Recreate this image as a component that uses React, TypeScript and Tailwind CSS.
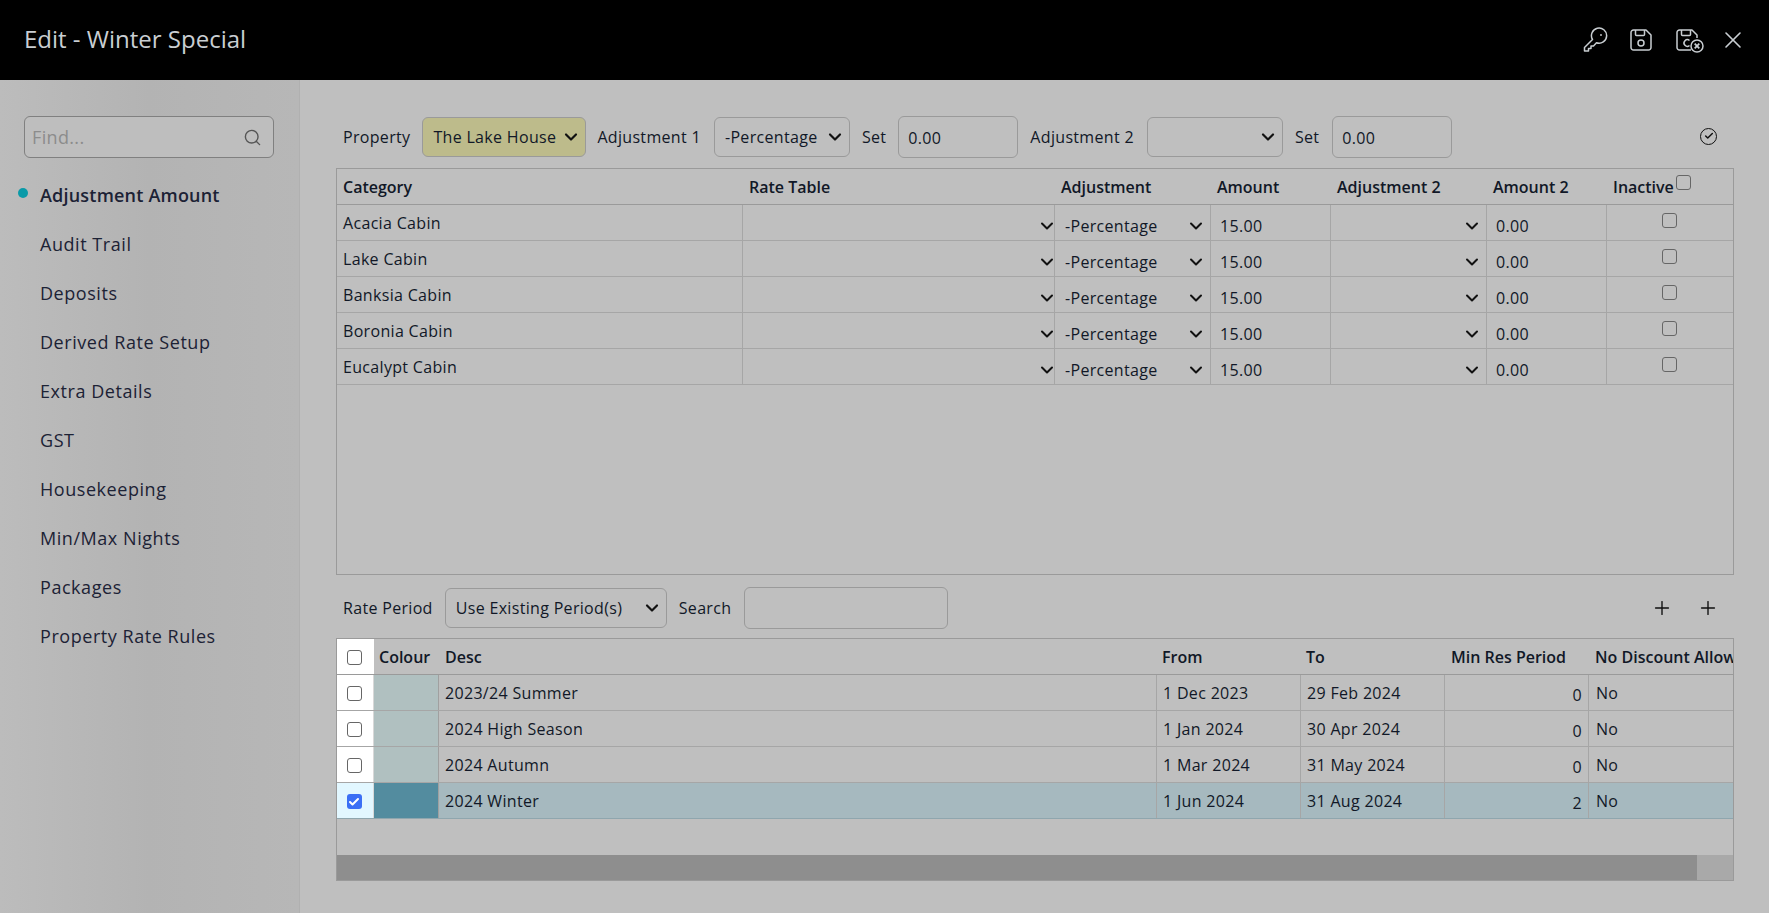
import { ChevronDown, Search, Check, Plus, X } from "lucide-react";

const navItems = [
  "Adjustment Amount",
  "Audit Trail",
  "Deposits",
  "Derived Rate Setup",
  "Extra Details",
  "GST",
  "Housekeeping",
  "Min/Max Nights",
  "Packages",
  "Property Rate Rules",
];

const categories = ["Acacia Cabin", "Lake Cabin", "Banksia Cabin", "Boronia Cabin", "Eucalypt Cabin"];

const periods = [
  { desc: "2023/24 Summer", from: "1 Dec 2023", to: "29 Feb 2024", min: 0, checked: false },
  { desc: "2024 High Season", from: "1 Jan 2024", to: "30 Apr 2024", min: 0, checked: false },
  { desc: "2024 Autumn", from: "1 Mar 2024", to: "31 May 2024", min: 0, checked: false },
  { desc: "2024 Winter", from: "1 Jun 2024", to: "31 Aug 2024", min: 2, checked: true },
];

function KeyIcon() {
  return (
    <svg width="26" height="26" viewBox="0 0 26 26" fill="none" stroke="#c9ced2" strokeWidth="1.5" strokeLinejoin="round">
      <path d="M9.5 12.5 1.5 20.5v3.5h4v-2.5h2.5V19h2.5l3-3.2a7.6 7.6 0 1 0-4-3.3Z" />
      <circle cx="18" cy="8" r="0.9" fill="#c9ced2" stroke="none" />
    </svg>
  );
}

function SaveIcon() {
  return (
    <svg width="22" height="22" viewBox="0 0 22 22" fill="none" stroke="#c9ced2" strokeWidth="1.5" strokeLinejoin="round">
      <path d="M3.5 1h12.5L21 6v12.5a2.5 2.5 0 0 1-2.5 2.5h-15A2.5 2.5 0 0 1 1 18.5v-15A2.5 2.5 0 0 1 3.5 1Z" />
      <path d="M5.5 1v4.5a1 1 0 0 0 1 1h7a1 1 0 0 0 1-1V1" />
      <circle cx="11" cy="14" r="3" />
    </svg>
  );
}

function SaveCloseIcon() {
  return (
    <svg width="28" height="24" viewBox="0 0 28 24" fill="none" stroke="#c9ced2" strokeWidth="1.5" strokeLinejoin="round">
      <path d="M15 21H3.5A2.5 2.5 0 0 1 1 18.5v-15A2.5 2.5 0 0 1 3.5 1h12.5L21 6v3" />
      <path d="M5.5 1v4.5a1 1 0 0 0 1 1h7a1 1 0 0 0 1-1V1" />
      <path d="M13.5 11.5a3.3 3.3 0 1 0 0 5" />
      <circle cx="21" cy="17" r="6" />
      <path d="m18.7 14.7 4.6 4.6m0-4.6-4.6 4.6" strokeWidth="1.8" />
    </svg>
  );
}

function SelectBox({ value, className }: { value: string; className: string }) {
  return (
    <div className={`flex h-10 items-center justify-between rounded-md border border-[#9a9a9a] pl-[10px] pr-[4px] text-[16px] text-[#111827] ${className}`}>
      <span className="whitespace-nowrap">{value}</span>
      <ChevronDown size={20} strokeWidth={2.6} className="shrink-0 text-[#111]" />
    </div>
  );
}

function TextBox({ value, className }: { value: string; className: string }) {
  return (
    <div className={`flex h-[42px] items-center rounded-md border border-[#9a9a9a] px-[9px] pt-[2px] text-[16px] text-[#111827] ${className}`}>
      {value}
    </div>
  );
}

function CellSelect({ value, tight }: { value: string; tight?: boolean }) {
  return (
    <div className={`flex h-full items-center justify-between border-l border-[#a6a6a6] pl-[10px] pt-[6px] ${tight ? "pr-0" : "pr-[4px]"}`}>
      <span>{value}</span>
      <ChevronDown size={20} strokeWidth={2.4} className={`shrink-0 text-[#111] ${tight ? "-mr-[3px]" : ""}`} />
    </div>
  );
}

function Checkbox({ checked }: { checked?: boolean }) {
  return checked ? (
    <div className="flex size-[15px] items-center justify-center rounded-[3px] bg-[#3b6ff5]">
      <Check size={12} strokeWidth={4} className="text-white" />
    </div>
  ) : (
    <div className="size-[15px] rounded-[3px] border-[1.5px] border-[#666]" />
  );
}

function Sidebar() {
  return (
    <aside className="w-[300px] shrink-0 border-r border-[#b0b0b0] bg-gradient-to-r from-[#bcbcbc] via-[#b3b3b3] to-[#b7b7b7] pl-6 pr-6 pt-[36px]">
      <div className="flex h-[42px] w-[250px] items-center justify-between rounded-md border border-[#808080] bg-[#bebebe] pl-[7px] pr-[11px]">
        <span className="text-[18px] tracking-[0.35px] text-[#8c8c8c]">Find...</span>
        <Search size={19} strokeWidth={1.75} className="text-[#555]" />
      </div>
      <nav className="mt-[13px] flex flex-col">
        {navItems.map((item, i) => (
          <div
            key={item}
            className={`relative flex h-[49px] items-center pl-[16px] text-[18px] text-[#1c2235] ${i === 0 ? "font-semibold tracking-[0.2px]" : "tracking-[0.55px]"}`}
          >
            {i === 0 && <span className="absolute left-[-6px] top-[17px] size-[10px] rounded-full bg-[#0a9aa8]" />}
            {item}
          </div>
        ))}
      </nav>
    </aside>
  );
}

const catCols = "grid grid-cols-[405px_312px_156px_120px_156px_120px_1fr]";
const periodCols = "grid grid-cols-[37px_65px_717px_144px_144px_144px_1fr]";

function CategoryTable() {
  return (
    <div className="mt-[10px] h-[407px] overflow-hidden border border-[#9a9a9a] text-[16px] text-[#111827]">
      <div className={`${catCols} h-[36px] items-center border-b border-[#9a9a9a] font-semibold tracking-normal`}>
        <div className="pl-[6px]">Category</div>
        <div className="pl-[7px]">Rate Table</div>
        <div className="pl-[7px]">Adjustment</div>
        <div className="pl-[7px]">Amount</div>
        <div className="pl-[7px]">Adjustment 2</div>
        <div className="pl-[7px]">Amount 2</div>
        <div className="flex items-center pl-[7px]">
          Inactive
          <div className="mb-2 ml-[2px]">
            <div className="size-[15px] rounded-[3px] border-[1.5px] border-[#666]" />
          </div>
        </div>
      </div>
      {categories.map((name) => (
        <div key={name} className={`${catCols} h-[36px] border-b border-[#a6a6a6]`}>
          <div className="flex items-center pl-[6px] pt-[1px]">{name}</div>
          <CellSelect value="" tight />
          <CellSelect value="-Percentage" />
          <div className="flex items-center border-l border-[#a6a6a6] pl-[9px] pt-[6px]">15.00</div>
          <CellSelect value="" />
          <div className="flex items-center border-l border-[#a6a6a6] pl-[9px] pt-[6px]">0.00</div>
          <div className="flex items-center justify-center border-l border-[#a6a6a6] pb-[5px] pr-[2px]">
            <Checkbox />
          </div>
        </div>
      ))}
    </div>
  );
}

function PeriodTable() {
  return (
    <div className="mt-[9px] flex h-[243px] flex-col overflow-hidden border border-[#9a9a9a] text-[16px] text-[#111827]">
      <div className="flex-1">
        <div className={`${periodCols} h-[36px] items-center border-b border-[#9a9a9a] font-semibold tracking-normal whitespace-nowrap`}>
          <div className="flex h-full items-center justify-center bg-white pr-[2px] pt-[2px]">
            <Checkbox />
          </div>
          <div className="pl-[5px]">Colour</div>
          <div className="pl-[6px]">Desc</div>
          <div className="pl-[6px]">From</div>
          <div className="pl-[6px]">To</div>
          <div className="pl-[7px]">Min Res Period</div>
          <div className="overflow-hidden pl-[7px]">No Discount Allowed</div>
        </div>
        {periods.map((p) => (
          <div
            key={p.desc}
            className={`${periodCols} h-[36px] border-b ${p.checked ? "border-[#8fa6ae] bg-[#a6b9bf]" : "border-[#a6a6a6]"}`}
          >
            <div className={`flex items-center justify-center border-r border-[#d8d8d8] pr-[2px] pt-[2px] ${p.checked ? "bg-[#e2f7ff]" : "bg-white"}`}>
              <Checkbox checked={p.checked} />
            </div>
            <div className={`border-r border-[#a0a0a0] ${p.checked ? "bg-[#538c9f]" : "bg-[#b0c0c0]"}`} />
            <div className="flex items-center pl-[6px]">{p.desc}</div>
            <div className="flex items-center border-l border-[#a6a6a6] pl-[6px]">{p.from}</div>
            <div className="flex items-center border-l border-[#a6a6a6] pl-[6px]">{p.to}</div>
            <div className="flex items-center justify-end border-l border-[#a6a6a6] pr-[6px] pt-[4px]">{p.min}</div>
            <div className="flex items-center border-l border-[#a6a6a6] pl-[7px]">No</div>
          </div>
        ))}
      </div>
      <div className="h-[25px] shrink-0 bg-[#a9a9a9]">
        <div className="h-full w-[1360px] bg-[#8e8e8e]" />
      </div>
    </div>
  );
}

export default function App() {
  return (
    <div className="flex h-[913px] w-full flex-col overflow-hidden bg-[#bfbfbf] [font-family:Open_Sans,sans-serif]">
      <header className="flex h-[80px] shrink-0 items-center justify-between bg-black pl-[24px] pr-[22px]">
        <h1 className="pb-[2px] text-[24px] font-normal text-[#c9ced2]">Edit - Winter Special</h1>
        <div className="flex items-center">
          <KeyIcon />
          <div className="ml-[21px]"><SaveIcon /></div>
          <div className="ml-[24px] mt-[2px]"><SaveCloseIcon /></div>
          <X size={28} strokeWidth={1.4} className="ml-[15px] text-[#c9ced2]" />
        </div>
      </header>
      <div className="flex flex-1">
        <Sidebar />
        <main className="flex-1 pl-[36px] pr-[35px] pt-[36px] text-[16px] tracking-[0.32px] text-[#111827]">
          <div className="flex items-center">
            <span className="ml-[7px]">Property</span>
            <SelectBox value="The Lake House" className="ml-[12px] w-[164px] border-[#9a9a9a] bg-[#bdbb8b]" />
            <span className="ml-[11px]">Adjustment 1</span>
            <SelectBox value="-Percentage" className="ml-[13px] w-[136px]" />
            <span className="ml-[12px]">Set</span>
            <TextBox value="0.00" className="ml-[12px] w-[120px]" />
            <span className="ml-[12px]">Adjustment 2</span>
            <SelectBox value="" className="ml-[13px] w-[136px]" />
            <span className="ml-[12px]">Set</span>
            <TextBox value="0.00" className="ml-[13px] w-[120px]" />
            <div className="mb-[2px] ml-auto mr-[17px] flex size-[17px] items-center justify-center rounded-full border-[1.5px] border-[#111]">
              <Check size={10} strokeWidth={3.5} className="text-[#111]" />
            </div>
          </div>
          <CategoryTable />
          <div className="mt-[12px] flex items-center">
            <span className="ml-[7px]">Rate Period</span>
            <SelectBox value="Use Existing Period(s)" className="ml-[12px] w-[222px]" />
            <span className="ml-[12px]">Search</span>
            <TextBox value="" className="ml-[13px] w-[204px]" />
            <div className="ml-auto mr-[15px] flex gap-[24px]">
              <Plus size={22} strokeWidth={1.5} className="text-[#111]" />
              <Plus size={22} strokeWidth={1.5} className="text-[#111]" />
            </div>
          </div>
          <PeriodTable />
        </main>
      </div>
    </div>
  );
}
